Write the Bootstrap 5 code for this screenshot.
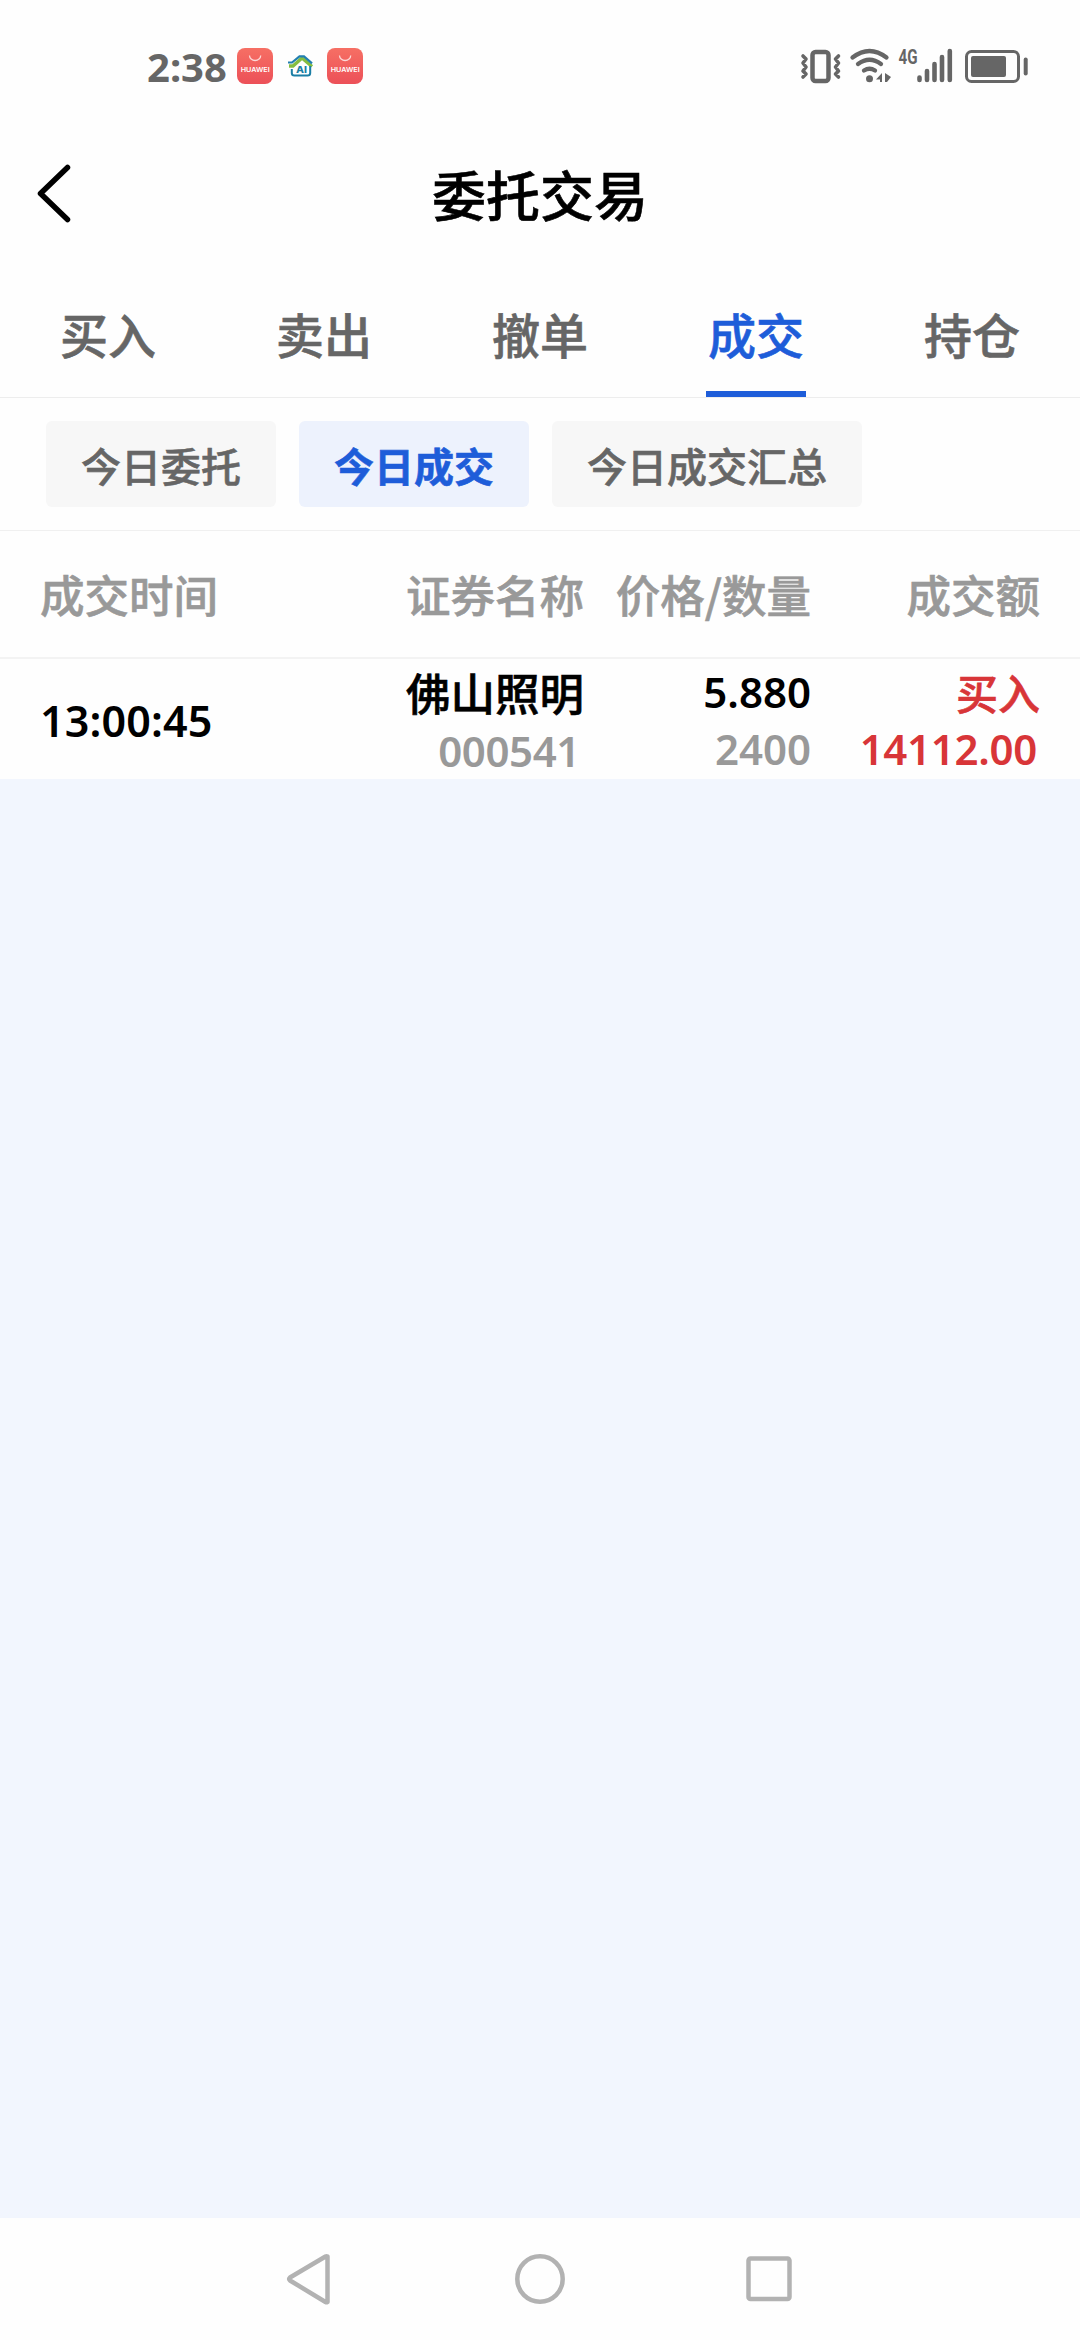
<!DOCTYPE html>
<html lang="zh-CN">
<head>
<meta charset="utf-8">
<meta name="viewport" content="width=device-width, initial-scale=1">
<title>委托交易</title>
<link href="https://cdn.jsdelivr.net/npm/bootstrap@5.3.0/dist/css/bootstrap.min.css" rel="stylesheet">
<style>
  body { font-family: "Noto Sans", "Noto Sans CJK SC", sans-serif; font-weight: 500; color: #000; background: #fff; }
  .zh { font-family: "Noto Sans CJK SC", sans-serif; -webkit-text-stroke: .6px currentColor; }
  .screen { width: 1080px; height: 2340px; background: #fefefe; }
  .statusbar { height: 130px; padding: 0 52px 0 147px; }
  .statusbar svg, .topbar svg, .sysnav svg { display: block; overflow: visible; }
  .clock { font-size: 40px; font-weight: 700; line-height: 56px; color: #666; width: 90px; letter-spacing: 0; }
  .statusbar > div { height: 54px; margin-top: 39px; }
  .topbar { height: 130px; padding: 0 34px; }
  .topbar .side { width: 60px; padding-bottom: 5px; }
  .topbar h1 { font-size: 54px; line-height: 70px; font-weight: 500; padding-bottom: 2px; }
  .tabs { height: 138px; border-bottom: 1px solid #ededed; }
  .tabs .nav-link { height: 137px; padding: 45px 0 0; font-size: 48px; line-height: 56px; color: #666; }
  .tabs .nav-link span { display: inline-block; height: 92px; padding: 0 2px; }
  .tabs .nav-link.active span { color: #1e5dd9; border-bottom: 6px solid #1e5dd9; }
  .filters { height: 133px; padding: 23px 46px 0; gap: 23px; border-bottom: 1px solid #f0f0f0; }
  .filters .btn { height: 86px; padding: 2px 35px 0; border: 0; border-radius: 6px; background: #f7f7f7; color: #666; font-size: 40px; line-height: 84px; font-weight: 500; }
  .filters .btn.active { background: #edf2fd; color: #1e5dd9; font-weight: 700; }
  .cols { display: grid; grid-template-columns: 260px 284px 227px 1fr; padding: 0 40px; }
  .colhead { height: 128px; font-size: 44.5px; line-height: 126px; color: #999; border-bottom: 2px solid #f3f3f3; white-space: nowrap; }
  .trade { height: 120px; line-height: 57px; font-size: 42px; font-weight: 600; white-space: nowrap; padding-top: 4px; }
  .trade .time { font-size: 43px; letter-spacing: .15px; padding-bottom: 2px; }
  .trade .stock { font-size: 44.5px; }
  .trade .muted { color: #999; }
  .trade .code { padding: 2px 4px 0 0; letter-spacing: -.4px; }
  .trade .buy { color: #d83538; }
  .trade .amount { letter-spacing: -.3px; padding-right: 3px; }
  .empty { background: #f2f6fe; }
  .sysnav { height: 122px; }
</style>
</head>
<body>
<main class="screen d-flex flex-column">
  <header class="statusbar d-flex justify-content-between">
    <div class="d-flex">
      <div class="clock">2:38</div>
      <svg width="130" height="54" viewBox="237 39 130 54">
        <defs>
          <linearGradient id="red" x1="0" y1="0" x2="0" y2="1"><stop offset="0" stop-color="#f66f64"/><stop offset="1" stop-color="#ec5058"/></linearGradient>
          <g id="store">
            <rect width="36" height="36" rx="8" fill="url(#red)"/>
            <path d="M12.500 7.500a5.600 5 0 0 0 11.200 0" fill="none" stroke="#fff" stroke-opacity=".75" stroke-width="1.300"/>
            <text x="18.200" y="23.600" text-anchor="middle" textLength="29" lengthAdjust="spacingAndGlyphs" font-family="Inter, sans-serif" font-size="6.500" font-weight="600" fill="#fff">HUAWEI</text>
          </g>
        </defs>
        <use href="#store" x="237" y="48"/>
        <use href="#store" x="327" y="48"/>
        <path d="M289 66h4l9-8 10 8.500" fill="none" stroke="#85bd41" stroke-width="3.400"/>
        <path d="M288 62.500h4l7.500-6.200h4.500l8 7" fill="none" stroke="#227fb0" stroke-width="2.200"/>
        <path d="M291.800 69v4q0 2.600 2.600 2.600h13.200q2.600 0 2.600-2.600v-7" fill="none" stroke="#1b7ea5" stroke-width="2"/>
        <text x="301.500" y="73" text-anchor="middle" textLength="11" lengthAdjust="spacingAndGlyphs" font-family="Inter, sans-serif" font-size="8.500" font-weight="800" fill="#1b7ea5">AI</text>
      </svg>
    </div>
    <div>
      <svg width="228" height="54" viewBox="800 39 228 54" fill="none" stroke="#666" stroke-linecap="round" stroke-linejoin="round">
        <rect x="812.500" y="52" width="16" height="29" rx="3" stroke-width="4.500"/>
        <path d="M803 56l3 3-3 4 3 4-3 4 3 3-3 3M838.500 56l-3 3 3 4-3 4 3 4-3 3 3 3" stroke-width="3.600"/>
        <path d="M852.500 57.500q17-13 34 0M858 64q11.500-8.500 23 0M864 70.500q5.500-3.500 11 0" stroke-width="4.300"/>
        <circle cx="869.500" cy="78.700" r="3.500" fill="#666" stroke="none"/>
        <path d="M882 73v9h-2v-2.500h-4zM885 73l6 4-4 5h-2z" fill="#666" stroke="none"/>
        <text x="898.500" y="64" textLength="19" lengthAdjust="spacingAndGlyphs" font-family="Roboto, sans-serif" font-size="20" font-weight="700" fill="#666" stroke="none">4G</text>
        <path d="M919.500 77.500v2.500M927 71v9M934.500 64v16M942 57v23M949.800 51v29" stroke-width="4.600"/>
        <rect x="966.500" y="51.500" width="52" height="30" rx="5" stroke-width="3"/>
        <rect x="971" y="56" width="35" height="21" rx="2" fill="#666" stroke="none"/>
        <path d="M1025.700 59.500v14" stroke-width="4"/>
      </svg>
    </div>
  </header>

  <nav class="topbar zh d-flex justify-content-between align-items-center">
    <div class="side">
      <svg width="40" height="64" viewBox="34 160 40 64"><path d="M67.500 166.500L40.500 192.500 67.500 218.500" fill="none" stroke="#000" stroke-width="5.500" stroke-linecap="round" stroke-linejoin="round"/></svg>
    </div>
    <h1 class="m-0">委托交易</h1>
    <div class="side"></div>
  </nav>

  <nav class="tabs nav nav-fill zh flex-nowrap">
    <a class="nav-link nav-item w-100"><span>买入</span></a>
    <a class="nav-link nav-item w-100"><span>卖出</span></a>
    <a class="nav-link nav-item w-100"><span>撤单</span></a>
    <a class="nav-link nav-item w-100 active"><span>成交</span></a>
    <a class="nav-link nav-item w-100"><span>持仓</span></a>
  </nav>

  <div class="filters zh d-flex">
    <button type="button" class="btn">今日委托</button>
    <button type="button" class="btn active">今日成交</button>
    <button type="button" class="btn">今日成交汇总</button>
  </div>

  <div class="colhead cols zh">
    <div>成交时间</div>
    <div class="text-end">证券名称</div>
    <div class="text-end">价格/数量</div>
    <div class="text-end">成交额</div>
  </div>
  <div class="trade cols">
    <div class="time align-self-center">13:00:45</div>
    <div class="text-end"><div class="zh stock fw-medium">佛山照明</div><div class="muted code">000541</div></div>
    <div class="text-end"><div>5.880</div><div class="muted">2400</div></div>
    <div class="text-end buy"><div class="zh fw-medium">买入</div><div class="amount">14112.00</div></div>
  </div>

  <div class="empty flex-grow-1"></div>

  <footer class="sysnav">
    <svg width="1080" height="122" viewBox="0 2218 1080 122" fill="none" stroke="#b2b2b2" stroke-width="4.500" stroke-linejoin="round">
      <path d="M327.500 2256.500v45.500q-1 .5-2 0L290 2280.500q-1.500-1.500 0-3L325.500 2256.500q1-.5 2 0z"/>
      <circle cx="540" cy="2279" r="22.700"/>
      <rect x="748.500" y="2258.500" width="41" height="40.500" rx="2"/>
    </svg>
  </footer>
</main>
<script src="https://cdn.jsdelivr.net/npm/bootstrap@5.3.0/dist/js/bootstrap.bundle.min.js"></script>
</body>
</html>
